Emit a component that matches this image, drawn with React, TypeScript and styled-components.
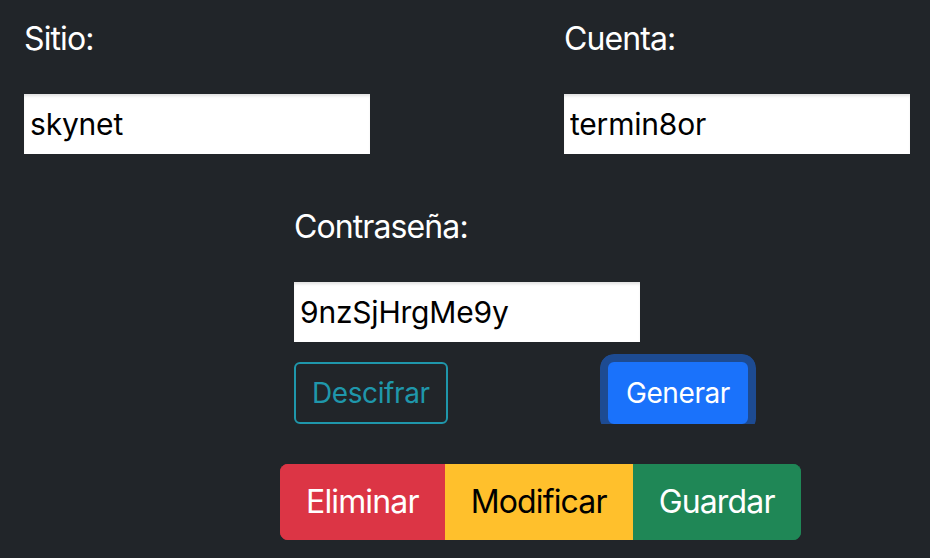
import styled, { createGlobalStyle, css } from 'styled-components';

const GlobalStyle = createGlobalStyle`
  html, body {
    margin: 0;
    padding: 0;
    background: #212529;
    overflow: hidden;
  }
  body {
    font-family: Inter, "Liberation Sans", sans-serif;
    color: #ffffff;
  }
  * {
    box-sizing: border-box;
  }
`;

type Variant = 'danger' | 'warning' | 'success';

const variants: Record<Variant, { bg: string; fg: string }> = {
  danger: { bg: '#dc3545', fg: '#ffffff' },
  warning: { bg: '#ffc02c', fg: '#000000' },
  success: { bg: '#1f8756', fg: '#ffffff' },
};

const App = () => {
  return (
    <>
      <GlobalStyle />
      <StPage>
        <StTopRow>
          <StField>
            <StLabel htmlFor="sitio">Sitio:</StLabel>
            <StInput id="sitio" defaultValue="skynet" />
          </StField>
          <StField>
            <StLabel htmlFor="cuenta">Cuenta:</StLabel>
            <StInput id="cuenta" defaultValue="termin8or" />
          </StField>
        </StTopRow>

        <StCenter>
          <StField>
            <StLabel htmlFor="pass">Contraseña:</StLabel>
            <StInput id="pass" defaultValue="9nzSjHrgMe9y" />
          </StField>
          <StActionRow>
            <StOutlineButton type="button">Descifrar</StOutlineButton>
            <StPrimaryButton type="button">Generar</StPrimaryButton>
          </StActionRow>
        </StCenter>

        <StGroup>
          <StGroupButton type="button" $variant="danger">
            Eliminar
          </StGroupButton>
          <StGroupButton type="button" $variant="warning">
            Modificar
          </StGroupButton>
          <StGroupButton type="button" $variant="success">
            Guardar
          </StGroupButton>
        </StGroup>
      </StPage>
    </>
  );
};

const StPage = styled.div`
  padding: 15px 24px;
  width: 930px;
  height: 558px;
`;

const StTopRow = styled.div`
  display: grid;
  grid-template-columns: 540px auto;
`;

const StField = styled.div`
  display: flex;
  flex-direction: column;
  align-items: flex-start;
`;

const StLabel = styled.label`
  font-size: 32px;
  line-height: 48px;
  letter-spacing: -0.9px;
  margin-bottom: 31px;
`;

const StInput = styled.input`
  width: 346px;
  height: 60px;
  border: none;
  outline: none;
  padding: 0 6px;
  background: #ffffff;
  color: #000000;
  font-family: Inter, "Liberation Sans", sans-serif;
  font-size: 30px;
  letter-spacing: -0.2px;
  box-shadow: inset 0 3px 3px -1px rgba(0, 0, 0, 0.12);
`;

const StCenter = styled.div`
  margin: 49px 0 0 270px;
`;

const StActionRow = styled.div`
  display: flex;
  justify-content: space-between;
  width: 454px;
  margin-top: 20px;
`;

const smallButton = css`
  height: 62px;
  padding: 8px 16px;
  border-radius: 6px;
  border: 2px solid transparent;
  font-family: Inter, "Liberation Sans", sans-serif;
  font-size: 28px;
  line-height: 42px;
  letter-spacing: -0.4px;
  cursor: pointer;
`;

const StOutlineButton = styled.button`
  ${smallButton};
  background: transparent;
  border-color: #1f97ab;
  color: #1f97ab;
`;

const StPrimaryButton = styled.button`
  ${smallButton};
  background: #1a72fb;
  border-color: #1a72fb;
  color: #ffffff;
  box-shadow: 0 0 0 8px #1d4b92;
  clip-path: inset(-8px -8px 0 -8px round 14px 14px 0 0);
`;

const StGroup = styled.div`
  display: flex;
  margin: 40px 0 0 256px;
  width: fit-content;
  border-radius: 8px;
  overflow: hidden;
`;

const StGroupButton = styled.button<{ $variant: Variant }>`
  height: 76px;
  padding: 12px 24px;
  border: 2px solid ${p => variants[p.$variant].bg};
  background: ${p => variants[p.$variant].bg};
  color: ${p => variants[p.$variant].fg};
  font-family: Inter, "Liberation Sans", sans-serif;
  font-size: 32px;
  line-height: 48px;
  letter-spacing: -0.85px;
  cursor: pointer;
`;

export default App;
